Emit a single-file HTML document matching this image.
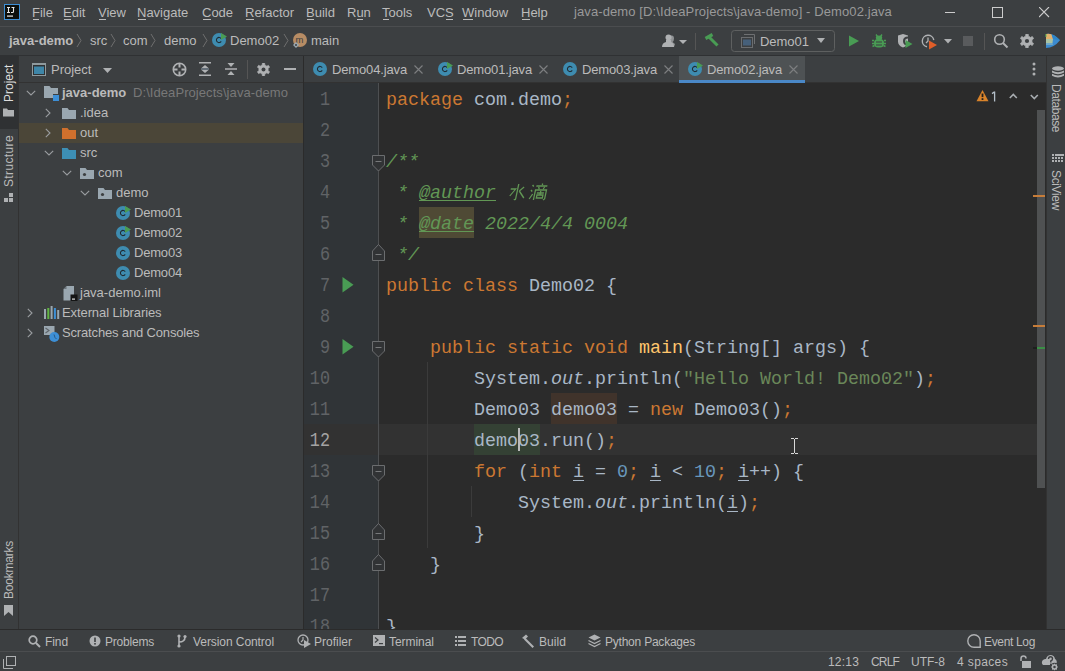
<!DOCTYPE html>
<html><head><meta charset="utf-8"><style>
html,body{margin:0;padding:0;width:1065px;height:671px;overflow:hidden;background:#3c3f41}
div,span,svg{position:absolute}
.t{font-family:"Liberation Sans",sans-serif;white-space:pre;line-height:20px}
.m{font-family:"Liberation Mono",monospace;white-space:pre;font-size:18.33px;line-height:31px;letter-spacing:0px;color:#a9b7c6}
.m span{position:static}
.ln{width:31px;text-align:right;font-size:20px;transform:scaleX(0.84);transform-origin:100% 0}
</style></head><body>
<div style="left:0px;top:0px;width:1065px;height:671px;background:#3c3f41;"></div>
<div style="left:0px;top:26px;width:1065px;height:1px;background:#4b4d4f;"></div>
<div style="left:0px;top:55px;width:1065px;height:1px;background:#2f3133;"></div>
<div style="left:18px;top:56px;width:1px;height:573px;background:#323232;"></div>
<div style="left:0px;top:56px;width:18px;height:73px;background:#2f3133;"></div>
<div style="left:303px;top:56px;width:1px;height:573px;background:#2b2b2b;"></div>
<div style="left:19px;top:82px;width:284px;height:1px;background:#323232;"></div>
<div style="left:1046px;top:56px;width:1px;height:573px;background:#323232;"></div>
<div style="left:304px;top:82px;width:742px;height:1px;background:#323232;"></div>
<div style="left:304px;top:83px;width:742px;height:546px;background:#2b2b2b;"></div>
<div style="left:304px;top:83px;width:74px;height:546px;background:#303437;"></div>
<div style="left:0px;top:629px;width:1065px;height:1px;background:#2b2b2b;"></div>
<div style="left:0px;top:651px;width:1065px;height:1px;background:#4b4d4f;"></div>
<svg style="left:4px;top:4px;" width="16" height="16" viewBox="0 0 16 16"><rect x="0.5" y="0.5" width="15" height="15" fill="#0c0f0c" stroke="#3d8fd6" stroke-width="1"/><path d="M3 3.5 L6 3.5 M4.5 3.5 L4.5 8.5 M3 8.5 L6 8.5 M7.5 3.5 L10.5 3.5 M9.5 3.5 L9.5 7.5 Q9.5 8.5 8.5 8.5 L7 8.5" stroke="#e8e8e8" stroke-width="1.1" fill="none"/><rect x="3" y="11.5" width="6" height="1.2" fill="#e8e8e8"/></svg>
<span class="t" style="left:32px;top:3.29px;font-size:13px;color:#bbbbbb;">File</span>
<div style="left:33px;top:19px;width:6px;height:1px;background:#bbbbbb;"></div>
<span class="t" style="left:63px;top:3.29px;font-size:13px;color:#bbbbbb;">Edit</span>
<div style="left:64px;top:19px;width:7px;height:1px;background:#bbbbbb;"></div>
<span class="t" style="left:98px;top:3.29px;font-size:13px;color:#bbbbbb;">View</span>
<div style="left:99px;top:19px;width:7px;height:1px;background:#bbbbbb;"></div>
<span class="t" style="left:137px;top:3.29px;font-size:13px;color:#bbbbbb;">Navigate</span>
<div style="left:138px;top:19px;width:8px;height:1px;background:#bbbbbb;"></div>
<span class="t" style="left:202px;top:3.29px;font-size:13px;color:#bbbbbb;">Code</span>
<div style="left:203px;top:19px;width:8px;height:1px;background:#bbbbbb;"></div>
<span class="t" style="left:245px;top:3.29px;font-size:13px;color:#bbbbbb;">Refactor</span>
<div style="left:246px;top:19px;width:8px;height:1px;background:#bbbbbb;"></div>
<span class="t" style="left:306px;top:3.29px;font-size:13px;color:#bbbbbb;">Build</span>
<div style="left:307px;top:19px;width:7px;height:1px;background:#bbbbbb;"></div>
<span class="t" style="left:347px;top:3.29px;font-size:13px;color:#bbbbbb;">Run</span>
<div style="left:357px;top:19px;width:6px;height:1px;background:#bbbbbb;"></div>
<span class="t" style="left:382px;top:3.29px;font-size:13px;color:#bbbbbb;">Tools</span>
<div style="left:383px;top:19px;width:6px;height:1px;background:#bbbbbb;"></div>
<span class="t" style="left:427px;top:3.29px;font-size:13px;color:#bbbbbb;">VCS</span>
<div style="left:446px;top:19px;width:7px;height:1px;background:#bbbbbb;"></div>
<span class="t" style="left:462px;top:3.29px;font-size:13px;color:#bbbbbb;">Window</span>
<div style="left:463px;top:19px;width:10px;height:1px;background:#bbbbbb;"></div>
<span class="t" style="left:521px;top:3.29px;font-size:13px;color:#bbbbbb;">Help</span>
<div style="left:522px;top:19px;width:8px;height:1px;background:#bbbbbb;"></div>
<span class="t" style="left:574px;top:2.49px;font-size:13px;color:#999999;letter-spacing:0.099px;">java-demo [D:\IdeaProjects\java-demo] - Demo02.java</span>
<div style="left:945px;top:12px;width:10px;height:1px;background:#cccccc;"></div>
<svg style="left:992px;top:7px;" width="12" height="12" viewBox="0 0 12 12"><rect x="0.5" y="0.5" width="10" height="10" fill="none" stroke="#cccccc" stroke-width="1"/></svg>
<svg style="left:1039px;top:7px;" width="12" height="12" viewBox="0 0 12 12"><path d="M0 0 L10 10 M10 0 L0 10" stroke="#cccccc" stroke-width="1.1"/></svg>
<span class="t" style="left:9px;top:31.49px;font-size:13px;color:#bbbbbb;font-weight:bold;">java-demo</span>
<svg style="left:76px;top:33px;" width="6" height="15" viewBox="0 0 6 15"><path d="M1 1 L5 7.5 L1 14" fill="none" stroke="#6e6e6e" stroke-width="1"/></svg>
<span class="t" style="left:90px;top:31.49px;font-size:13px;color:#bbbbbb;">src</span>
<svg style="left:110px;top:33px;" width="6" height="15" viewBox="0 0 6 15"><path d="M1 1 L5 7.5 L1 14" fill="none" stroke="#6e6e6e" stroke-width="1"/></svg>
<span class="t" style="left:123px;top:31.49px;font-size:13px;color:#bbbbbb;">com</span>
<svg style="left:150px;top:33px;" width="6" height="15" viewBox="0 0 6 15"><path d="M1 1 L5 7.5 L1 14" fill="none" stroke="#6e6e6e" stroke-width="1"/></svg>
<span class="t" style="left:164px;top:31.49px;font-size:13px;color:#bbbbbb;">demo</span>
<svg style="left:202px;top:33px;" width="6" height="15" viewBox="0 0 6 15"><path d="M1 1 L5 7.5 L1 14" fill="none" stroke="#6e6e6e" stroke-width="1"/></svg>
<!--demo02 icon-->
<svg style="left:212px;top:33px;" width="16" height="14" viewBox="0 0 16 14"><circle cx="7" cy="7" r="7" fill="#3e8cb0"/><path d="M9.2 5.6 A2.6 2.6 0 1 0 9.2 8.4" fill="none" stroke="#1f2b33" stroke-width="1.05"/><path d="M9 0 L15 3.5 L9 7 Z" fill="#499c54"/></svg>
<span class="t" style="left:230px;top:31.49px;font-size:13px;color:#bbbbbb;">Demo02</span>
<svg style="left:283px;top:33px;" width="6" height="15" viewBox="0 0 6 15"><path d="M1 1 L5 7.5 L1 14" fill="none" stroke="#6e6e6e" stroke-width="1"/></svg>
<svg style="left:292px;top:32px;" width="16" height="16" viewBox="0 0 16 16"><circle cx="8" cy="8" r="7" fill="#b78c64"/><text x="3.6" y="11" font-family="Liberation Sans" font-size="9.5" fill="#3c3f41">m</text><path d="M4 10 L7 13 L4 16 L1 13 Z" fill="#9aa7b0"/><circle cx="4" cy="13" r="1" fill="#3c3f41"/></svg>
<span class="t" style="left:311px;top:31.49px;font-size:13px;color:#bbbbbb;">main</span>
<svg style="left:662px;top:34px;" width="26" height="14" viewBox="0 0 26 14"><path d="M9 1.5 Q12 1 12 4.5 Q12 7 10.5 8 L13 10 L12 13 L8 13 Z" fill="#8f9294"/><circle cx="6.5" cy="3.5" r="3" fill="#afb1b3"/><path d="M4 6 L9 6 L9 8 Q12 9 12 13 L0 13 Q0 9 4 8 Z" fill="#afb1b3"/><path d="M17 6 L25 6 L21 10 Z" fill="#afb1b3"/></svg>
<div style="left:695px;top:33px;width:1px;height:17px;background:#555555;"></div>
<svg style="left:704px;top:33px;" width="16" height="16" viewBox="0 0 16 16"><path d="M1.5 5.5 L8.5 1.5" stroke="#499c54" stroke-width="3.2"/><path d="M5 4 L13.5 12.5" stroke="#499c54" stroke-width="3"/></svg>
<svg style="left:731px;top:30px;" width="105" height="22" viewBox="0 0 105 22"><rect x="0.5" y="0.5" width="103" height="21" rx="3" fill="none" stroke="#5e6060"/><path d="M13 4.5 L23.5 4.5 L23.5 14" fill="none" stroke="#6e7072" stroke-width="1"/><path d="M13 6.5 L21.5 6.5 L21.5 14" fill="none" stroke="#6e7072" stroke-width="1" opacity="0"/><rect x="10.5" y="7.5" width="11" height="10" fill="none" stroke="#6b6d6f"/><rect x="12" y="9.5" width="8" height="6" fill="#46607a"/><path d="M86 8 L94 8 L90 13 Z" fill="#afb1b3"/></svg>
<span class="t" style="left:760px;top:32.49px;font-size:13px;color:#bbbbbb;letter-spacing:-0.026px;">Demo01</span>
<svg style="left:848px;top:35px;" width="12" height="12" viewBox="0 0 12 12"><path d="M1 0.5 L11 6 L1 11.5 Z" fill="#499c54"/></svg>
<svg style="left:872px;top:33px;" width="14" height="15" viewBox="0 0 14 15"><path d="M4 1.5 L5.5 3.5 M10 1.5 L8.5 3.5" stroke="#499c54" stroke-width="1.4"/><ellipse cx="7" cy="4.8" rx="3.2" ry="2.2" fill="#499c54"/><rect x="2" y="6" width="10" height="8.5" rx="4" fill="#499c54"/><path d="M0 7.5 L2 7.5 M12 7.5 L14 7.5 M0 10.5 L2 10.5 M12 10.5 L14 10.5 M0.5 13.5 L2.5 12.5 M13.5 13.5 L11.5 12.5" stroke="#499c54" stroke-width="1.4"/><path d="M4 9 L10 9 M4 12 L10 12" stroke="#3c3f41" stroke-width="1.2"/></svg>
<svg style="left:897px;top:33px;" width="16" height="16" viewBox="0 0 16 16"><path d="M1 2.5 L6 1 L11 2.5 L11 8.5 Q11 12.5 6 14.5 Q1 12.5 1 8.5 Z" fill="#afb1b3"/><path d="M11 4.5 Q7 4.5 7 8 Q7 11.5 11 11.5" fill="none" stroke="#3c3f41" stroke-width="2"/><path d="M8.5 7 L15.5 11 L8.5 15 Z" fill="#499c54"/></svg>
<svg style="left:921px;top:34px;" width="26" height="16" viewBox="0 0 26 16"><path d="M12.8 6 A5.8 5.8 0 1 0 6 12.8" fill="none" stroke="#afb1b3" stroke-width="1.4"/><path d="M7 3.5 L7 7 L5 9" fill="none" stroke="#afb1b3" stroke-width="1.3"/><path d="M8 6.5 L16 11 L8 15.5 Z" fill="#e05e29"/></svg>
<svg style="left:944px;top:39px;" width="8" height="5" viewBox="0 0 8 5"><path d="M0 0 L8 0 L4 4.5 Z" fill="#afb1b3"/></svg>
<div style="left:963px;top:36px;width:10px;height:10px;background:#595b5d;"></div>
<div style="left:984px;top:33px;width:1px;height:17px;background:#555555;"></div>
<svg style="left:993px;top:33px;" width="16" height="16" viewBox="0 0 16 16"><circle cx="6.5" cy="6.5" r="4.8" fill="none" stroke="#afb1b3" stroke-width="1.6"/><path d="M10 10 L14.5 14.5" stroke="#afb1b3" stroke-width="2"/></svg>
<svg style="left:1020px;top:34px;" width="14" height="14" viewBox="0 0 14 14"><g transform="scale(1.0)"><polygon points="13.24,9.94 12.96,10.47 12.64,10.98 12.27,11.45 10.52,10.55 10.20,10.84 9.85,11.11 9.48,11.34 9.10,11.54 8.69,11.70 8.28,11.83 8.17,13.80 7.58,13.88 6.97,13.90 6.37,13.87 5.78,13.79 5.69,11.82 5.27,11.69 4.87,11.52 4.48,11.32 4.12,11.09 3.77,10.82 3.45,10.52 1.70,11.42 1.33,10.94 1.01,10.43 0.74,9.89 0.51,9.34 2.17,8.28 2.07,7.85 2.02,7.42 2.00,6.98 2.02,6.55 2.08,6.11 2.18,5.69 0.52,4.62 0.76,4.06 1.04,3.53 1.36,3.02 1.73,2.55 3.48,3.45 3.80,3.16 4.15,2.89 4.52,2.66 4.90,2.46 5.31,2.30 5.72,2.17 5.83,0.20 6.42,0.12 7.03,0.10 7.63,0.13 8.22,0.21 8.31,2.18 8.73,2.31 9.13,2.48 9.52,2.68 9.88,2.91 10.23,3.18 10.55,3.48 12.30,2.58 12.67,3.06 12.99,3.57 13.26,4.11 13.49,4.66 11.83,5.72 11.93,6.15 11.98,6.58 12.00,7.02 11.98,7.45 11.92,7.89 11.82,8.31 13.48,9.38" fill="#afb1b3" stroke="#afb1b3" stroke-width="0.8" stroke-linejoin="round"/><circle cx="7" cy="7" r="2.1" fill="#3c3f41"/></g></svg>
<svg style="left:1045px;top:33px;" width="16" height="16" viewBox="0 0 16 16"><path d="M1 1 Q8 -0.5 15 7.3 Q9 15 1 15 Z" fill="#3b8bd0"/><path d="M1 1 Q4 0.3 6.5 1.2 L8 6 L1 6 Z" fill="#e3b06c"/><path d="M1 6 L8 6 L7.5 10 L1 10 Z" fill="#a9c3a3"/><path d="M1 10 L7.5 10 L8 12 L1 12 Z" fill="#6ea8c8"/><path d="M6.5 1.2 Q11 2.5 15 7.3 L8 6 Z" fill="#2e86c9"/><path d="M1 1 L1 4" stroke="#5fb85a" stroke-width="1"/></svg>
<span class="t" style="left:2px;top:102px;font-size:12px;color:#dddddd;transform-origin:0 0;transform:rotate(-90deg);line-height:14px;">Project</span>
<svg style="left:3px;top:108px;" width="11" height="9" viewBox="0 0 11 9"><path d="M0 0.5 L4 0.5 L5 2 L11 2 L11 8.5 L0 8.5 Z" fill="#afb1b3"/></svg>
<span class="t" style="left:2px;top:187px;font-size:12px;color:#bbbbbb;transform-origin:0 0;transform:rotate(-90deg);line-height:14px;letter-spacing:0.370px;">Structure</span>
<svg style="left:4px;top:193px;" width="10" height="10" viewBox="0 0 10 10"><rect x="5" y="0" width="4" height="4" fill="#afb1b3"/><rect x="0" y="5" width="4" height="4" fill="#afb1b3"/><rect x="5" y="5" width="4" height="4" fill="#afb1b3"/></svg>
<span class="t" style="left:2px;top:599px;font-size:12px;color:#bbbbbb;transform-origin:0 0;transform:rotate(-90deg);line-height:14px;letter-spacing:-0.224px;">Bookmarks</span>
<svg style="left:4px;top:605px;" width="10" height="11" viewBox="0 0 10 11"><path d="M0 0 L9 0 L9 11 L4.5 7 L0 11 Z" fill="#afb1b3"/></svg>
<span class="t" style="left:1063px;top:84px;font-size:12px;color:#bbbbbb;transform-origin:0 0;transform:rotate(90deg);line-height:14px;letter-spacing:-0.420px;">Database</span>
<svg style="left:1051px;top:66px;" width="14" height="13" viewBox="0 0 14 13"><ellipse cx="7" cy="2.5" rx="6" ry="2.2" fill="#afb1b3"/><path d="M1 4.5 Q7 8 13 4.5 L13 6.5 Q7 10 1 6.5Z M1 7.8 Q7 11.3 13 7.8 L13 9.8 Q7 13.3 1 9.8Z" fill="#afb1b3"/></svg>
<span class="t" style="left:1063px;top:170px;font-size:12px;color:#bbbbbb;transform-origin:0 0;transform:rotate(90deg);line-height:14px;letter-spacing:-0.353px;">SciView</span>
<svg style="left:1052px;top:154px;" width="12" height="10" viewBox="0 0 12 10"><g fill="#afb1b3"><rect x="0" y="0" width="2" height="2"/><rect x="3" y="0" width="9" height="2"/><rect x="0" y="3" width="2" height="2"/><rect x="3" y="3" width="2" height="2"/><rect x="6" y="3" width="2" height="2"/><rect x="9" y="3" width="2" height="2"/><rect x="0" y="6" width="2" height="2"/><rect x="3" y="6" width="2" height="2"/><rect x="6" y="6" width="2" height="2"/><rect x="9" y="6" width="2" height="2"/></g></svg>
<svg style="left:32px;top:63px;" width="14" height="13" viewBox="0 0 14 13"><rect x="0" y="0" width="14" height="13" fill="#8f9a9e"/><rect x="1" y="2" width="12" height="10" fill="#2f3234"/><rect x="2" y="3.5" width="10" height="7.5" fill="#3e86a8"/></svg>
<span class="t" style="left:51px;top:60.49px;font-size:13px;color:#bbbbbb;">Project</span>
<svg style="left:103px;top:67.5px;" width="9" height="6" viewBox="0 0 9 6"><path d="M0 0 L9 0 L4.5 5 Z" fill="#afb1b3"/></svg>
<svg style="left:172px;top:62px;" width="15" height="15" viewBox="0 0 15 15"><circle cx="7.5" cy="7.5" r="6.2" fill="none" stroke="#afb1b3" stroke-width="1.6"/><path d="M7.5 1 L7.5 5.5 M7.5 9.5 L7.5 14 M1 7.5 L5.5 7.5 M9.5 7.5 L14 7.5" stroke="#afb1b3" stroke-width="2"/></svg>
<svg style="left:199px;top:62px;" width="13" height="14" viewBox="0 0 13 14"><path d="M0 0.8 L12 0.8 M0 13.2 L12 13.2" stroke="#afb1b3" stroke-width="1.5"/><path d="M2.5 6 L6 3 L9.5 6 Z M2.5 8 L6 11 L9.5 8 Z" fill="#afb1b3"/><path d="M2 7 L10 7" stroke="#8d9fb0" stroke-width="1"/></svg>
<svg style="left:225px;top:62px;" width="13" height="14" viewBox="0 0 13 14"><path d="M0 7 L12 7" stroke="#afb1b3" stroke-width="1.5"/><path d="M2.5 1 L9.5 1 L6 5 Z M2.5 13 L9.5 13 L6 9 Z" fill="#afb1b3"/></svg>
<div style="left:247px;top:60px;width:1px;height:19px;background:#555555;"></div>
<svg style="left:257px;top:63px;" width="13" height="13" viewBox="0 0 13 13"><g transform="scale(0.9285714285714286)"><polygon points="13.24,9.94 12.96,10.47 12.64,10.98 12.27,11.45 10.52,10.55 10.20,10.84 9.85,11.11 9.48,11.34 9.10,11.54 8.69,11.70 8.28,11.83 8.17,13.80 7.58,13.88 6.97,13.90 6.37,13.87 5.78,13.79 5.69,11.82 5.27,11.69 4.87,11.52 4.48,11.32 4.12,11.09 3.77,10.82 3.45,10.52 1.70,11.42 1.33,10.94 1.01,10.43 0.74,9.89 0.51,9.34 2.17,8.28 2.07,7.85 2.02,7.42 2.00,6.98 2.02,6.55 2.08,6.11 2.18,5.69 0.52,4.62 0.76,4.06 1.04,3.53 1.36,3.02 1.73,2.55 3.48,3.45 3.80,3.16 4.15,2.89 4.52,2.66 4.90,2.46 5.31,2.30 5.72,2.17 5.83,0.20 6.42,0.12 7.03,0.10 7.63,0.13 8.22,0.21 8.31,2.18 8.73,2.31 9.13,2.48 9.52,2.68 9.88,2.91 10.23,3.18 10.55,3.48 12.30,2.58 12.67,3.06 12.99,3.57 13.26,4.11 13.49,4.66 11.83,5.72 11.93,6.15 11.98,6.58 12.00,7.02 11.98,7.45 11.92,7.89 11.82,8.31 13.48,9.38" fill="#afb1b3" stroke="#afb1b3" stroke-width="0.8" stroke-linejoin="round"/><circle cx="7" cy="7" r="2.1" fill="#3c3f41"/></g></svg>
<div style="left:284px;top:68px;width:12px;height:2px;background:#afb1b3;"></div>
<div style="left:19px;top:123px;width:284px;height:20px;background:#4b4638;"></div>
<svg style="left:26px;top:90px;" width="10" height="6" viewBox="0 0 10 6"><path d="M0.8 0.8 L5 5 L9.2 0.8" fill="none" stroke="#9a9da0" stroke-width="1.1"/></svg>
<svg style="left:44px;top:86px;" width="15" height="15" viewBox="0 0 15 15"><path d="M0 0 L5.5 0 L7 2 L14 2 L14 8 L9 8 L9 12 L0 12 Z" fill="#9aa7b0"/><rect x="9" y="9" width="6" height="6" fill="#3d8fd6"/></svg>
<span class="t" style="left:62px;top:83.49px;font-size:13px;color:#bbbbbb;font-weight:bold;">java-demo</span>
<span class="t" style="left:133px;top:83.49px;font-size:13px;color:#787878;letter-spacing:0.071px;">D:\IdeaProjects\java-demo</span>
<svg style="left:45px;top:107.5px;" width="6" height="10" viewBox="0 0 6 10"><path d="M0.8 0.8 L5 5 L0.8 9.2" fill="none" stroke="#9a9da0" stroke-width="1.1"/></svg>
<svg style="left:62px;top:108px;" width="14" height="11" viewBox="0 0 14 11"><path d="M0 0 L5.5 0 L7 2 L14 2 L14 11 L0 11 Z" fill="#9aa7b0"/></svg>
<span class="t" style="left:80px;top:103.49px;font-size:13px;color:#bbbbbb;">.idea</span>
<svg style="left:45px;top:127.5px;" width="6" height="10" viewBox="0 0 6 10"><path d="M0.8 0.8 L5 5 L0.8 9.2" fill="none" stroke="#9a9da0" stroke-width="1.1"/></svg>
<svg style="left:62px;top:128px;" width="14" height="11" viewBox="0 0 14 11"><path d="M0 0 L5.5 0 L7 2 L14 2 L14 11 L0 11 Z" fill="#d0702d"/></svg>
<span class="t" style="left:80px;top:123.49px;font-size:13px;color:#bbbbbb;">out</span>
<svg style="left:44px;top:150px;" width="10" height="6" viewBox="0 0 10 6"><path d="M0.8 0.8 L5 5 L9.2 0.8" fill="none" stroke="#9a9da0" stroke-width="1.1"/></svg>
<svg style="left:62px;top:148px;" width="14" height="11" viewBox="0 0 14 11"><path d="M0 0 L5.5 0 L7 2 L14 2 L14 11 L0 11 Z" fill="#3d8fb5"/></svg>
<span class="t" style="left:80px;top:143.49px;font-size:13px;color:#bbbbbb;">src</span>
<svg style="left:62px;top:170px;" width="10" height="6" viewBox="0 0 10 6"><path d="M0.8 0.8 L5 5 L9.2 0.8" fill="none" stroke="#9a9da0" stroke-width="1.1"/></svg>
<svg style="left:80px;top:168px;" width="14" height="11" viewBox="0 0 14 11"><path d="M0 0 L5.5 0 L7 2 L14 2 L14 11 L0 11 Z" fill="#9aa7b0"/><circle cx="4.5" cy="6.5" r="1.6" fill="#3c3f41"/></svg>
<span class="t" style="left:98px;top:163.49px;font-size:13px;color:#bbbbbb;">com</span>
<svg style="left:80px;top:190px;" width="10" height="6" viewBox="0 0 10 6"><path d="M0.8 0.8 L5 5 L9.2 0.8" fill="none" stroke="#9a9da0" stroke-width="1.1"/></svg>
<svg style="left:98px;top:188px;" width="14" height="11" viewBox="0 0 14 11"><path d="M0 0 L5.5 0 L7 2 L14 2 L14 11 L0 11 Z" fill="#9aa7b0"/><circle cx="4.5" cy="6.5" r="1.6" fill="#3c3f41"/></svg>
<span class="t" style="left:116px;top:183.49px;font-size:13px;color:#bbbbbb;">demo</span>
<svg style="left:116px;top:206px;" width="16" height="14" viewBox="0 0 16 14"><circle cx="7" cy="7" r="7" fill="#3e8cb0"/><path d="M9.2 5.6 A2.6 2.6 0 1 0 9.2 8.4" fill="none" stroke="#1f2b33" stroke-width="1.05"/><path d="M9 0 L15 3.5 L9 7 Z" fill="#499c54"/></svg>
<span class="t" style="left:134px;top:203.49px;font-size:13px;color:#bbbbbb;letter-spacing:-0.193px;">Demo01</span>
<svg style="left:116px;top:226px;" width="16" height="14" viewBox="0 0 16 14"><circle cx="7" cy="7" r="7" fill="#3e8cb0"/><path d="M9.2 5.6 A2.6 2.6 0 1 0 9.2 8.4" fill="none" stroke="#1f2b33" stroke-width="1.05"/><path d="M9 0 L15 3.5 L9 7 Z" fill="#499c54"/></svg>
<span class="t" style="left:134px;top:223.49px;font-size:13px;color:#bbbbbb;letter-spacing:-0.193px;">Demo02</span>
<svg style="left:116px;top:246px;" width="16" height="14" viewBox="0 0 16 14"><circle cx="7" cy="7" r="7" fill="#3e8cb0"/><path d="M9.2 5.6 A2.6 2.6 0 1 0 9.2 8.4" fill="none" stroke="#1f2b33" stroke-width="1.05"/></svg>
<span class="t" style="left:134px;top:243.49px;font-size:13px;color:#bbbbbb;letter-spacing:-0.193px;">Demo03</span>
<svg style="left:116px;top:266px;" width="16" height="14" viewBox="0 0 16 14"><circle cx="7" cy="7" r="7" fill="#3e8cb0"/><path d="M9.2 5.6 A2.6 2.6 0 1 0 9.2 8.4" fill="none" stroke="#1f2b33" stroke-width="1.05"/></svg>
<span class="t" style="left:134px;top:263.49px;font-size:13px;color:#bbbbbb;letter-spacing:-0.193px;">Demo04</span>
<svg style="left:63px;top:286px;" width="15" height="16" viewBox="0 0 15 16"><path d="M3.5 0 L11 0 L11 14.5 L0.5 14.5 L0.5 3 Z" fill="#9aa7b0"/><path d="M0.5 3 L3.5 3 L3.5 0 Z" fill="#3c3f41" opacity=".5"/><rect x="7.5" y="8.5" width="7" height="6.5" fill="#151515"/><rect x="9" y="12.5" width="3" height="1.2" fill="#e0e0e0"/></svg>
<span class="t" style="left:80px;top:283.49px;font-size:13px;color:#bbbbbb;">java-demo.iml</span>
<svg style="left:27px;top:307.5px;" width="6" height="10" viewBox="0 0 6 10"><path d="M0.8 0.8 L5 5 L0.8 9.2" fill="none" stroke="#9a9da0" stroke-width="1.1"/></svg>
<svg style="left:44px;top:306px;" width="16" height="13" viewBox="0 0 16 13"><rect x="0" y="3" width="2" height="10" fill="#9aa7b0"/><rect x="3.3" y="2" width="2" height="11" fill="#62b543"/><rect x="6.6" y="0" width="2" height="13" fill="#9aa7b0"/><rect x="9.9" y="2" width="2" height="11" fill="#3d8fd6"/><rect x="13.2" y="4" width="2" height="9" fill="#9aa7b0"/></svg>
<span class="t" style="left:62px;top:303.49px;font-size:13px;color:#bbbbbb;letter-spacing:-0.094px;">External Libraries</span>
<svg style="left:27px;top:327.5px;" width="6" height="10" viewBox="0 0 6 10"><path d="M0.8 0.8 L5 5 L0.8 9.2" fill="none" stroke="#9a9da0" stroke-width="1.1"/></svg>
<svg style="left:44px;top:326px;" width="16" height="16" viewBox="0 0 16 16"><rect x="0" y="0" width="10.5" height="9" fill="#9aa7b0"/><path d="M1.5 2 L5 4.5 L1.5 7" stroke="#5e6469" fill="none" stroke-width="1.1"/><circle cx="10.3" cy="11" r="5" fill="#3d8fd6"/><path d="M10 8.5 L11 11.5 L12.5 13" stroke="#2a5a85" stroke-width="1" fill="none"/></svg>
<span class="t" style="left:62px;top:323.49px;font-size:13px;color:#bbbbbb;letter-spacing:-0.157px;">Scratches and Consoles</span>
<div style="left:679px;top:56px;width:126px;height:24px;background:#4e5254;"></div>
<div style="left:679px;top:80px;width:126px;height:3px;background:#4a88c7;"></div>
<svg style="left:313px;top:62px;" width="16" height="14" viewBox="0 0 16 14"><circle cx="7" cy="7" r="7" fill="#3e8cb0"/><path d="M9.2 5.6 A2.6 2.6 0 1 0 9.2 8.4" fill="none" stroke="#1f2b33" stroke-width="1.05"/></svg>
<span class="t" style="left:332px;top:60.49px;font-size:13px;color:#bbbbbb;letter-spacing:-0.148px;">Demo04.java</span>
<svg style="left:414px;top:65px;" width="9" height="9" viewBox="0 0 9 9"><path d="M0.5 0.5 L8.5 8.5 M8.5 0.5 L0.5 8.5" stroke="#7d7f81" stroke-width="1.1"/></svg>
<svg style="left:438px;top:62px;" width="16" height="14" viewBox="0 0 16 14"><circle cx="7" cy="7" r="7" fill="#3e8cb0"/><path d="M9.2 5.6 A2.6 2.6 0 1 0 9.2 8.4" fill="none" stroke="#1f2b33" stroke-width="1.05"/><path d="M9 0 L15 3.5 L9 7 Z" fill="#499c54"/></svg>
<span class="t" style="left:457px;top:60.49px;font-size:13px;color:#bbbbbb;letter-spacing:-0.148px;">Demo01.java</span>
<svg style="left:539px;top:65px;" width="9" height="9" viewBox="0 0 9 9"><path d="M0.5 0.5 L8.5 8.5 M8.5 0.5 L0.5 8.5" stroke="#7d7f81" stroke-width="1.1"/></svg>
<svg style="left:563px;top:62px;" width="16" height="14" viewBox="0 0 16 14"><circle cx="7" cy="7" r="7" fill="#3e8cb0"/><path d="M9.2 5.6 A2.6 2.6 0 1 0 9.2 8.4" fill="none" stroke="#1f2b33" stroke-width="1.05"/></svg>
<span class="t" style="left:582px;top:60.49px;font-size:13px;color:#bbbbbb;letter-spacing:-0.148px;">Demo03.java</span>
<svg style="left:664px;top:65px;" width="9" height="9" viewBox="0 0 9 9"><path d="M0.5 0.5 L8.5 8.5 M8.5 0.5 L0.5 8.5" stroke="#7d7f81" stroke-width="1.1"/></svg>
<svg style="left:688px;top:62px;" width="16" height="14" viewBox="0 0 16 14"><circle cx="7" cy="7" r="7" fill="#3e8cb0"/><path d="M9.2 5.6 A2.6 2.6 0 1 0 9.2 8.4" fill="none" stroke="#1f2b33" stroke-width="1.05"/><path d="M9 0 L15 3.5 L9 7 Z" fill="#499c54"/></svg>
<span class="t" style="left:707px;top:60.49px;font-size:13px;color:#bbbbbb;letter-spacing:-0.148px;">Demo02.java</span>
<svg style="left:789px;top:65px;" width="9" height="9" viewBox="0 0 9 9"><path d="M0.5 0.5 L8.5 8.5 M8.5 0.5 L0.5 8.5" stroke="#7d7f81" stroke-width="1.1"/></svg>
<svg style="left:1032px;top:62px;" width="4" height="4" viewBox="0 0 4 4"><circle cx="2" cy="2" r="1.5" fill="#afb1b3"/></svg>
<svg style="left:1032px;top:67px;" width="4" height="4" viewBox="0 0 4 4"><circle cx="2" cy="2" r="1.5" fill="#afb1b3"/></svg>
<svg style="left:1032px;top:72px;" width="4" height="4" viewBox="0 0 4 4"><circle cx="2" cy="2" r="1.5" fill="#afb1b3"/></svg>
<div style="left:304px;top:424px;width:74px;height:31px;background:#323232;"></div>
<div style="left:379px;top:424px;width:666px;height:31px;background:#323232;"></div>
<div style="left:551px;top:393px;width:66px;height:31px;background:#40332b;"></div>
<div style="left:474px;top:424px;width:66px;height:31px;background:#344134;"></div>
<div style="left:419px;top:207px;width:55px;height:31px;background:#4f4a35;"></div>
<div style="left:427px;top:362px;width:1px;height:186px;background:#3b3b3b;"></div>
<div style="left:471px;top:486px;width:1px;height:31px;background:#3b3b3b;"></div>
<div style="left:378px;top:83px;width:1px;height:546px;background:#4d4f51;"></div>
<span class="m ln" style="left:298.5px;top:83.5px;color:#606366">1</span>
<span class="m ln" style="left:298.5px;top:114.5px;color:#606366">2</span>
<span class="m ln" style="left:298.5px;top:145.5px;color:#606366">3</span>
<span class="m ln" style="left:298.5px;top:176.5px;color:#606366">4</span>
<span class="m ln" style="left:298.5px;top:207.5px;color:#606366">5</span>
<span class="m ln" style="left:298.5px;top:238.5px;color:#606366">6</span>
<span class="m ln" style="left:298.5px;top:269.5px;color:#606366">7</span>
<span class="m ln" style="left:298.5px;top:300.5px;color:#606366">8</span>
<span class="m ln" style="left:298.5px;top:331.5px;color:#606366">9</span>
<span class="m ln" style="left:298.5px;top:362.5px;color:#606366">10</span>
<span class="m ln" style="left:298.5px;top:393.5px;color:#606366">11</span>
<span class="m ln" style="left:298.5px;top:424.5px;color:#a4a3a3">12</span>
<span class="m ln" style="left:298.5px;top:455.5px;color:#606366">13</span>
<span class="m ln" style="left:298.5px;top:486.5px;color:#606366">14</span>
<span class="m ln" style="left:298.5px;top:517.5px;color:#606366">15</span>
<span class="m ln" style="left:298.5px;top:548.5px;color:#606366">16</span>
<span class="m ln" style="left:298.5px;top:579.5px;color:#606366">17</span>
<span class="m ln" style="left:298.5px;top:610.5px;color:#606366">18</span>
<svg style="left:372px;top:155px;" width="13" height="17" viewBox="0 0 13 17"><path d="M0.5 0.5 L12.5 0.5 L12.5 10 L6.5 16 L0.5 10 Z" fill="#313335" stroke="#6b6d6f"/><path d="M3.5 6.5 L9.5 6.5" stroke="#77797b"/></svg>
<svg style="left:372px;top:244px;" width="13" height="17" viewBox="0 0 13 17"><path d="M0.5 16.5 L12.5 16.5 L12.5 7 L6.5 0.5 L0.5 7 Z" fill="#313335" stroke="#6b6d6f"/><path d="M3.5 10.5 L9.5 10.5" stroke="#77797b"/></svg>
<svg style="left:372px;top:341px;" width="13" height="17" viewBox="0 0 13 17"><path d="M0.5 0.5 L12.5 0.5 L12.5 10 L6.5 16 L0.5 10 Z" fill="#313335" stroke="#6b6d6f"/><path d="M3.5 6.5 L9.5 6.5" stroke="#77797b"/></svg>
<svg style="left:372px;top:465px;" width="13" height="17" viewBox="0 0 13 17"><path d="M0.5 0.5 L12.5 0.5 L12.5 10 L6.5 16 L0.5 10 Z" fill="#313335" stroke="#6b6d6f"/><path d="M3.5 6.5 L9.5 6.5" stroke="#77797b"/></svg>
<svg style="left:372px;top:523px;" width="13" height="17" viewBox="0 0 13 17"><path d="M0.5 16.5 L12.5 16.5 L12.5 7 L6.5 0.5 L0.5 7 Z" fill="#313335" stroke="#6b6d6f"/><path d="M3.5 10.5 L9.5 10.5" stroke="#77797b"/></svg>
<svg style="left:372px;top:554px;" width="13" height="17" viewBox="0 0 13 17"><path d="M0.5 16.5 L12.5 16.5 L12.5 7 L6.5 0.5 L0.5 7 Z" fill="#313335" stroke="#6b6d6f"/><path d="M3.5 10.5 L9.5 10.5" stroke="#77797b"/></svg>
<svg style="left:342px;top:277px;" width="12" height="16" viewBox="0 0 12 16"><path d="M0.5 0 L11.5 7.75 L0.5 15.5 Z" fill="#499c54"/></svg>
<svg style="left:342px;top:339px;" width="12" height="16" viewBox="0 0 12 16"><path d="M0.5 0 L11.5 7.75 L0.5 15.5 Z" fill="#499c54"/></svg>
<span class="m" style="left:386px;top:85px"><span style="color:#cc7832;">package</span><span style="color:#a9b7c6;"> com.demo</span><span style="color:#cc7832;">;</span></span>
<span class="m" style="left:386px;top:147px"><span style="color:#629755;font-style:italic;">/**</span></span>
<span class="m" style="left:386px;top:178px"><span style="color:#629755;font-style:italic;"> * </span><span style="color:#629755;font-style:italic;text-decoration:underline;text-underline-offset:2px;text-decoration-skip-ink:none;">@author</span><span style="color:#629755;font-style:italic;"> </span></span>
<span class="m" style="left:386px;top:209px"><span style="color:#629755;font-style:italic;"> * </span><span style="color:#629755;font-style:italic;text-decoration:underline;text-underline-offset:2px;text-decoration-skip-ink:none;">@date</span><span style="color:#629755;font-style:italic;"> 2022/4/4 0004</span></span>
<span class="m" style="left:386px;top:240px"><span style="color:#629755;font-style:italic;"> */</span></span>
<span class="m" style="left:386px;top:271px"><span style="color:#cc7832;">public class </span><span style="color:#a9b7c6;">Demo02 {</span></span>
<span class="m" style="left:386px;top:333px"><span style="color:#cc7832;">    public static void </span><span style="color:#ffc66d;">main</span><span style="color:#a9b7c6;">(String[] args) {</span></span>
<span class="m" style="left:386px;top:364px"><span style="color:#a9b7c6;">        System.</span><span style="color:#a9b7c6;font-style:italic;">out</span><span style="color:#a9b7c6;">.println(</span><span style="color:#6a8759;">&quot;Hello World! Demo02&quot;</span><span style="color:#a9b7c6;">)</span><span style="color:#cc7832;">;</span></span>
<span class="m" style="left:386px;top:395px"><span style="color:#a9b7c6;">        Demo03 demo03 = </span><span style="color:#cc7832;">new </span><span style="color:#a9b7c6;">Demo03()</span><span style="color:#cc7832;">;</span></span>
<span class="m" style="left:386px;top:426px"><span style="color:#a9b7c6;">        demo03.run()</span><span style="color:#cc7832;">;</span></span>
<span class="m" style="left:386px;top:457px"><span style="color:#a9b7c6;">        </span><span style="color:#cc7832;">for </span><span style="color:#a9b7c6;">(</span><span style="color:#cc7832;">int </span><span style="color:#a9b7c6;text-decoration:underline;text-underline-offset:3px;text-decoration-skip-ink:none;">i</span><span style="color:#a9b7c6;"> = </span><span style="color:#6897bb;">0</span><span style="color:#cc7832;">; </span><span style="color:#a9b7c6;text-decoration:underline;text-underline-offset:3px;text-decoration-skip-ink:none;">i</span><span style="color:#a9b7c6;"> &lt; </span><span style="color:#6897bb;">10</span><span style="color:#cc7832;">; </span><span style="color:#a9b7c6;text-decoration:underline;text-underline-offset:3px;text-decoration-skip-ink:none;">i</span><span style="color:#a9b7c6;">++) {</span></span>
<span class="m" style="left:386px;top:488px"><span style="color:#a9b7c6;">            System.</span><span style="color:#a9b7c6;font-style:italic;">out</span><span style="color:#a9b7c6;">.println(</span><span style="color:#a9b7c6;text-decoration:underline;text-underline-offset:3px;text-decoration-skip-ink:none;">i</span><span style="color:#a9b7c6;">)</span><span style="color:#cc7832;">;</span></span>
<span class="m" style="left:386px;top:519px"><span style="color:#a9b7c6;">        }</span></span>
<span class="m" style="left:386px;top:550px"><span style="color:#a9b7c6;">    }</span></span>
<span class="m" style="left:386px;top:612px"><span style="color:#a9b7c6;">}</span></span>
<svg style="left:506px;top:183px;" width="46" height="19" viewBox="0 0 46 19"><g fill="none" stroke="#629755" stroke-width="1.3" transform="translate(4,0) skewX(-12)"><path d="M9 1 L9 16 Q9 17.2 7.3 16.2 M2 6 L7 6 L2.5 13 M15 4 L11 8 M11 8 L17 15"/><g transform="translate(21,0)"><path d="M2 2 L3.5 3.5 M1.5 7 L3 8.5 M1.5 16 L4 11 M11.5 0.5 L12 2 M6 3 L17 3 M8.5 4 L9.5 6 M14.5 4 L13.5 6 M6 17 L6 7 L17 7 L17 16 L15.5 17 M8 10 L15 10 M11.5 8 L11.5 12 M8.5 12 L14.5 12 L14.5 15 L8.5 15 Z"/></g></g></svg>
<div style="left:518px;top:428px;width:2px;height:23px;background:#bbbbbb;"></div>
<svg style="left:790px;top:437px;" width="9" height="18" viewBox="0 0 9 18"><path d="M1 1.5 L4 1.5 M5 1.5 L8 1.5 M4.5 2 L4.5 16 M1 16.5 L4 16.5 M5 16.5 L8 16.5" fill="none" stroke="#d8d8d8" stroke-width="1"/></svg>
<svg style="left:976px;top:90px;" width="13" height="12" viewBox="0 0 13 12"><path d="M6.5 0 L12.5 11.2 L0.5 11.2 Z" fill="#d9832a"/><rect x="5.6" y="3.5" width="1.8" height="3.6" fill="#1e1e1e"/><rect x="5.6" y="8.2" width="1.8" height="1.8" fill="#1e1e1e"/></svg>
<svg style="left:991px;top:91px;" width="6" height="11" viewBox="0 0 6 11"><path d="M3.6 0.5 L3.6 10.5 M3.6 0.8 L1 2.6" stroke="#b4bfc9" stroke-width="1.3" fill="none"/></svg>
<svg style="left:1009px;top:93px;" width="9" height="6" viewBox="0 0 9 6"><path d="M0.8 5 L4.3 1.5 L7.8 5" fill="none" stroke="#a8adb1" stroke-width="1.6"/></svg>
<svg style="left:1030px;top:94px;" width="9" height="6" viewBox="0 0 9 6"><path d="M0.8 1 L4.3 4.5 L7.8 1" fill="none" stroke="#a8adb1" stroke-width="1.6"/></svg>
<div style="left:1037px;top:110px;width:8px;height:378px;background:#4f5152;"></div>
<div style="left:1033px;top:195px;width:12px;height:2px;background:#c77d3a;"></div>
<div style="left:1033px;top:325px;width:12px;height:2px;background:#c77d3a;"></div>
<div style="left:1033px;top:347px;width:12px;height:2px;background:#3b8f46;"></div>
<div style="left:1033px;top:347px;width:4px;height:2px;background:#1e1e1e;"></div>
<div style="left:0px;top:629px;width:1065px;height:42px;background:#3c3f41;"></div>
<div style="left:0px;top:629px;width:1065px;height:1px;background:#2b2b2b;"></div>
<div style="left:0px;top:651px;width:1065px;height:1px;background:#4b4d4f;"></div>
<svg style="left:28px;top:635px;" width="13" height="13" viewBox="0 0 13 13"><circle cx="5" cy="5" r="3.8" fill="none" stroke="#afb1b3" stroke-width="1.7"/><path d="M8 8 L12 12" stroke="#afb1b3" stroke-width="2"/></svg>
<span class="t" style="left:45px;top:631.84px;font-size:12px;color:#bbbbbb;letter-spacing:-0.086px;">Find</span>
<svg style="left:89px;top:635px;" width="12" height="12" viewBox="0 0 12 12"><circle cx="6" cy="6" r="5.5" fill="#afb1b3"/><rect x="5.2" y="2.5" width="1.6" height="4.5" fill="#3c3f41"/><rect x="5.2" y="8" width="1.6" height="1.6" fill="#3c3f41"/></svg>
<span class="t" style="left:105px;top:631.84px;font-size:12px;color:#bbbbbb;letter-spacing:-0.211px;">Problems</span>
<svg style="left:177px;top:634px;" width="11" height="14" viewBox="0 0 11 14"><path d="M2 1 L2 13 M2 8 Q8 8 8 3" fill="none" stroke="#afb1b3" stroke-width="1.6"/><circle cx="2" cy="2" r="1.6" fill="#afb1b3"/><circle cx="8" cy="2.5" r="1.6" fill="#afb1b3"/><circle cx="2" cy="12" r="1.6" fill="#afb1b3"/></svg>
<span class="t" style="left:193px;top:631.84px;font-size:12px;color:#bbbbbb;letter-spacing:-0.070px;">Version Control</span>
<svg style="left:297px;top:634px;" width="15" height="15" viewBox="0 0 15 15"><circle cx="6" cy="6" r="5" fill="none" stroke="#afb1b3" stroke-width="1.3"/><path d="M6 3 L6 6 L4 8" fill="none" stroke="#afb1b3" stroke-width="1.2"/><path d="M7 6 L14 10 L7 14 Z" fill="#afb1b3"/></svg>
<span class="t" style="left:314px;top:631.84px;font-size:12px;color:#bbbbbb;letter-spacing:-0.002px;">Profiler</span>
<svg style="left:373px;top:635px;" width="12" height="11" viewBox="0 0 12 11"><rect x="0" y="0" width="12" height="11" fill="#afb1b3"/><path d="M2 2.5 L5 5 L2 7.5" fill="none" stroke="#3c3f41" stroke-width="1.2"/><rect x="6" y="8" width="4" height="1.2" fill="#3c3f41"/></svg>
<span class="t" style="left:389px;top:631.84px;font-size:12px;color:#bbbbbb;letter-spacing:-0.045px;">Terminal</span>
<svg style="left:455px;top:636px;" width="11" height="10" viewBox="0 0 11 10"><g fill="#afb1b3"><rect x="0" y="0" width="2" height="2"/><rect x="3" y="0" width="8" height="2"/><rect x="0" y="4" width="2" height="2"/><rect x="3" y="4" width="8" height="2"/><rect x="0" y="8" width="2" height="2"/><rect x="3" y="8" width="8" height="2"/></g></svg>
<span class="t" style="left:471px;top:631.84px;font-size:12px;color:#bbbbbb;letter-spacing:-0.609px;">TODO</span>
<svg style="left:521px;top:634px;" width="15" height="14" viewBox="0 0 15 14"><path d="M1 4 L5 0.5 L7 2.5 L4 5.5 Z" fill="#afb1b3"/><path d="M4.5 4 L13 12.5 L11.5 14 L3 5.5 Z" fill="#afb1b3"/></svg>
<span class="t" style="left:539px;top:631.84px;font-size:12px;color:#bbbbbb;letter-spacing:0.062px;">Build</span>
<svg style="left:588px;top:634px;" width="13" height="14" viewBox="0 0 13 14"><path d="M6.5 0.5 L12.5 3.5 L6.5 6.5 L0.5 3.5 Z" fill="#afb1b3"/><path d="M0.5 6.5 L6.5 9.5 L12.5 6.5 M0.5 9.5 L6.5 12.5 L12.5 9.5" fill="none" stroke="#afb1b3" stroke-width="1.3"/></svg>
<span class="t" style="left:605px;top:631.84px;font-size:12px;color:#bbbbbb;letter-spacing:-0.224px;">Python Packages</span>
<svg style="left:967px;top:634px;" width="14" height="14" viewBox="0 0 14 14"><path d="M7 0.8 A6.2 6.2 0 1 0 7 13.2 L13.2 13.2 L13.2 7 A6.2 6.2 0 0 0 7 0.8 Z" fill="none" stroke="#afb1b3" stroke-width="1.4"/></svg>
<span class="t" style="left:984px;top:631.84px;font-size:12px;color:#bbbbbb;letter-spacing:-0.335px;">Event Log</span>
<svg style="left:3px;top:656px;" width="13" height="13" viewBox="0 0 13 13"><rect x="3.5" y="0.5" width="9" height="9" fill="none" stroke="#afb1b3"/><path d="M0.5 3 L0.5 12.5 L10 12.5" fill="none" stroke="#afb1b3"/></svg>
<span class="t" style="left:828px;top:651.84px;font-size:12px;color:#bbbbbb;letter-spacing:0.197px;">12:13</span>
<span class="t" style="left:871px;top:651.84px;font-size:12px;color:#bbbbbb;letter-spacing:-0.836px;">CRLF</span>
<span class="t" style="left:911px;top:651.84px;font-size:12px;color:#bbbbbb;letter-spacing:0.000px;">UTF-8</span>
<span class="t" style="left:957px;top:651.84px;font-size:12px;color:#bbbbbb;letter-spacing:0.373px;">4 spaces</span>
<svg style="left:1018px;top:655px;" width="13" height="13" viewBox="0 0 13 13"><path d="M1 1 Q1 -0.5 3.5 0.5" fill="none"/><path d="M3 6 L3 3.5 Q3 1 5.5 1 Q8 1 8 3.5" fill="none" stroke="#afb1b3" stroke-width="1.5"/><rect x="4" y="6" width="9" height="7" fill="#afb1b3"/></svg>
<svg style="left:1041px;top:654px;" width="18" height="17" viewBox="0 0 18 17"><path d="M2 11 Q0 9 1.5 6.5 Q3 4.5 5 5 Q6 1 10 1 Q13.5 1.5 14 5 Q16.5 6.5 15.5 9.5 L13 11 Z" fill="#afb1b3"/><path d="M7.5 5 Q7.5 2.8 9.5 2.8 Q11.5 2.8 11.5 4.8 Q11.5 6.3 9.8 7 L9.8 8.5" fill="none" stroke="#3c3f41" stroke-width="1.4"/><rect x="9" y="9.6" width="1.6" height="1.6" fill="#3c3f41"/><circle cx="13.5" cy="13" r="4.2" fill="#3c3f41"/><g transform="translate(10,9.5) scale(0.5)"><polygon points="7,0 9,2 12,1.5 12,5 14,7 12,9 12,12.5 9,12 7,14 5,12 2,12.5 2,9 0,7 2,5 2,1.5 5,2" fill="#afb1b3"/><circle cx="7" cy="7" r="2.5" fill="#3c3f41"/></g></svg>
</body></html>
